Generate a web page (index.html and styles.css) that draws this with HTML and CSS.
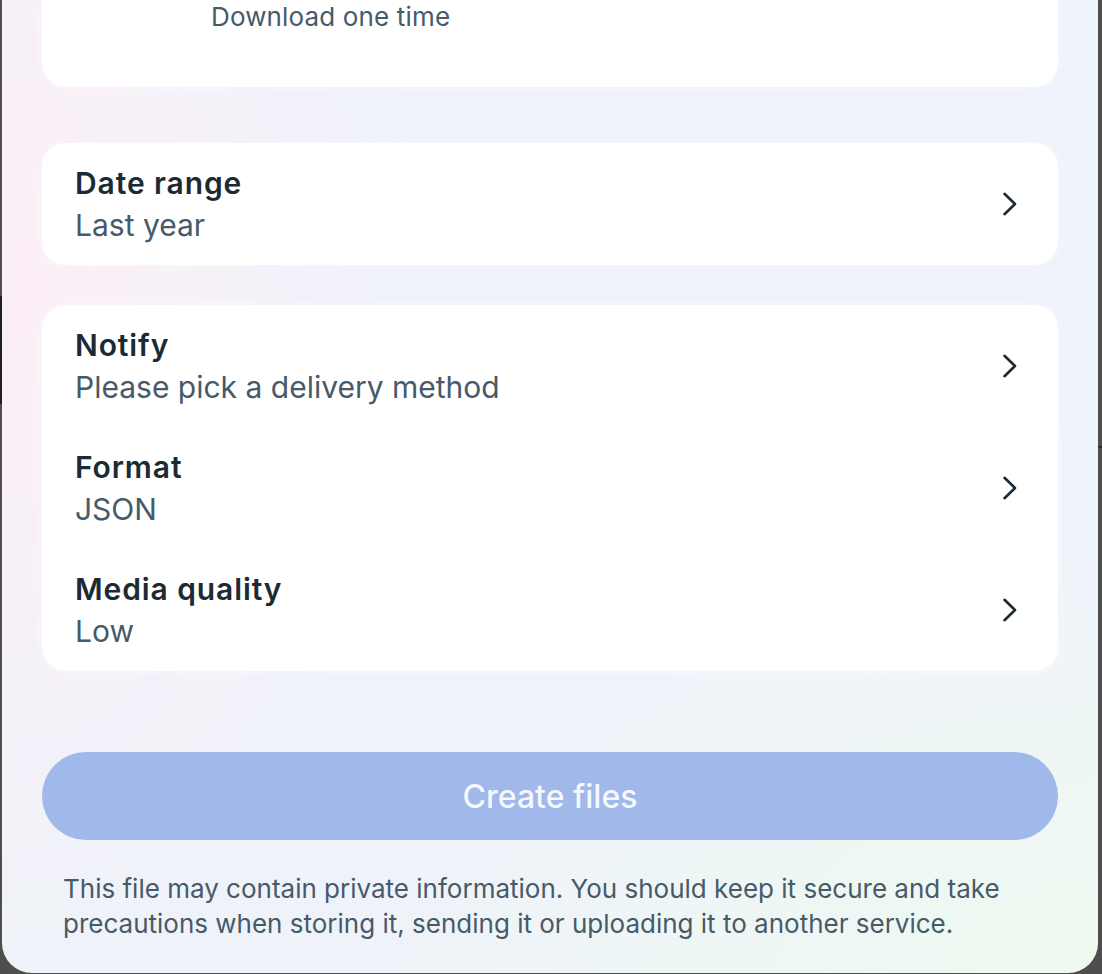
FILE: index.html
```html
<!DOCTYPE html>
<html lang="en">
<head>
<meta charset="utf-8">
<title>Download your information</title>
<link rel="stylesheet" href="styles.css">
</head>
<body>
<div class="modal">
  <div class="card card-freq">
    <div class="option">
      <div class="option-sub">Download one time</div>
    </div>
  </div>

  <div class="card">
    <div class="row">
      <div class="row-text">
        <div class="row-title">Date range</div>
        <div class="row-sub">Last year</div>
      </div>
      <svg class="chev" viewBox="0 0 16 24" width="16" height="24"><path d="M2.5 1.8 L13 12 L2.5 22.2"/></svg>
    </div>
  </div>

  <div class="card">
    <div class="row">
      <div class="row-text">
        <div class="row-title">Notify</div>
        <div class="row-sub">Please pick a delivery method</div>
      </div>
      <svg class="chev" viewBox="0 0 16 24" width="16" height="24"><path d="M2.5 1.8 L13 12 L2.5 22.2"/></svg>
    </div>
    <div class="row">
      <div class="row-text">
        <div class="row-title">Format</div>
        <div class="row-sub">JSON</div>
      </div>
      <svg class="chev" viewBox="0 0 16 24" width="16" height="24"><path d="M2.5 1.8 L13 12 L2.5 22.2"/></svg>
    </div>
    <div class="row">
      <div class="row-text">
        <div class="row-title">Media quality</div>
        <div class="row-sub">Low</div>
      </div>
      <svg class="chev" viewBox="0 0 16 24" width="16" height="24"><path d="M2.5 1.8 L13 12 L2.5 22.2"/></svg>
    </div>
  </div>

  <button class="create" type="button" disabled>Create files</button>

  <p class="note">This file may contain private information. You should keep it secure and take precautions when storing it, sending it or uploading it to another service.</p>
</div>
</body>
</html>
```

FILE: styles.css
```css
html, body {
  margin: 0;
  padding: 0;
}
body {
  height: 974px;
  overflow: hidden;
  background:
    linear-gradient(#1d1f23, #1d1f23) 0 296px / 2px 108px no-repeat,
    linear-gradient(#2e2f31, #2e2f31) right 0 top 446px / 4px 2px no-repeat,
    #4e4e4f;
  font-family: Inter, "Noto Sans", "Liberation Sans", sans-serif;
}
.modal {
  margin: -83px 4px 0 2px;
  padding: 20px 40px 32px 40px;
  border-radius: 0 0 30px 30px;
  background:
    radial-gradient(ellipse 420px 700px at 0% 35%, rgba(253, 238, 246, 0.95) 0%, rgba(253, 238, 246, 0) 100%),
    radial-gradient(ellipse 700px 420px at 100% 100%, rgba(238, 250, 240, 1) 0%, rgba(238, 250, 240, 0) 100%),
    linear-gradient(180deg, #eef2fb 0%, #eff3f9 100%);
  display: flex;
  flex-direction: column;
}
.card {
  background: #ffffff;
  border-radius: 24px;
  box-shadow: 0 0 14px rgba(255, 255, 255, 0.55);
}
.card + .card {
  margin-top: 40px;
}
.card-freq {
  padding: 60px 33px 50px 33px;
}
.card-freq + .card {
  margin-top: 56px;
}
.option {
  padding-left: 136px;
}
.option-sub {
  font-size: 26px;
  line-height: 40px;
  letter-spacing: 0.15px;
  color: #465a69;
}
.row {
  height: 122px;
  box-sizing: border-box;
  display: flex;
  align-items: center;
  padding: 0 40px 0 33px;
}
.row-text {
  flex: 1;
  min-width: 0;
}
.row-title {
  font-size: 30px;
  line-height: 42px;
  font-weight: 600;
  letter-spacing: 0.9px;
  color: #1c2b33;
}
.row-sub {
  font-size: 30px;
  line-height: 42px;
  color: #465a69;
}
.chev {
  display: block;
  flex: none;
}
.chev path {
  fill: none;
  stroke: #1c2b33;
  stroke-width: 2.6;
  stroke-linecap: round;
  stroke-linejoin: round;
}
.create {
  margin-top: 81px;
  height: 88px;
  border: none;
  border-radius: 44px;
  background: #a0b9ea;
  color: rgba(255, 255, 255, 0.92);
  font-family: inherit;
  font-size: 32px;
  font-weight: 500;
  cursor: default;
}
.note {
  margin: 31px 0 0 0;
  padding: 0 21px;
  font-size: 26px;
  line-height: 35px;
  color: #465a69;
}
```
